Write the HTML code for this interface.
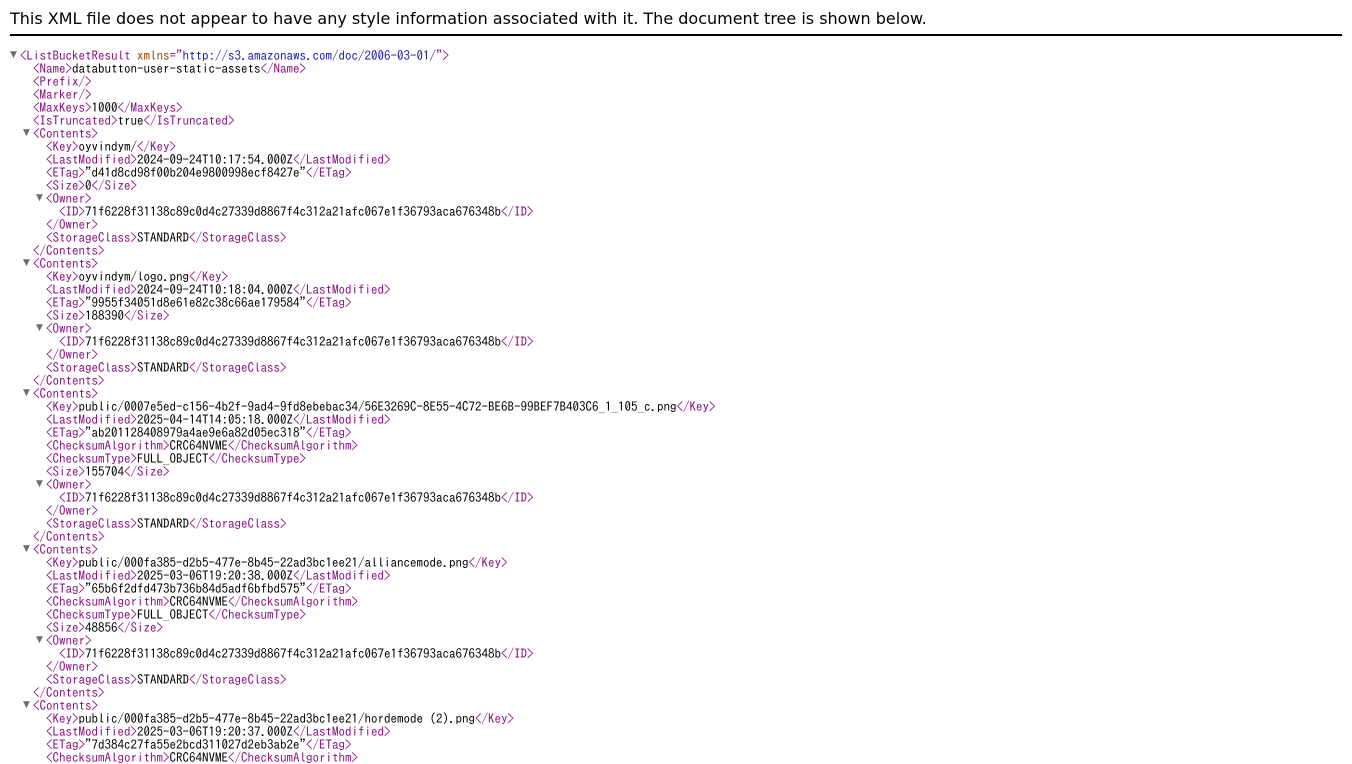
<!DOCTYPE html>
<html><head><meta charset="utf-8"><style>
html,body{margin:0;padding:0;background:#fff;width:1352px;height:760px;overflow:hidden}
.hd{position:absolute;left:10px;top:0;width:1332px;height:34px;border-bottom:2px solid #000;font-family:"DejaVu Sans","Liberation Sans",sans-serif;font-size:16px;line-height:16px}
.hd span{position:absolute;left:0;top:11px;white-space:nowrap}
#tree{position:absolute;left:20px;top:49px;font-family:"IPAGothic","Noto Sans CJK JP",monospace;font-size:13px;line-height:13px;color:#000}
.l{height:13px;position:relative;white-space:pre}
.t{color:#881280}.a{color:#994500}.v{color:#1a1aa6}
.ar{position:absolute;left:-10px;top:0;color:#6e6e6e;font-size:9px;font-family:"DejaVu Sans",sans-serif;line-height:13px}
</style></head><body>
<div class="hd"><span>This XML file does not appear to have any style information associated with it. The document tree is shown below.</span></div>
<div id="tree"><div class="l" style="padding-left:0"><span class="ar">▼</span><span class="t">&lt;ListBucketResult</span> <span class="a">xmlns</span><span class="t">="</span><span class="v">http://s3.amazonaws.com/doc/2006-03-01/</span><span class="t">"&gt;</span></div>
<div class="l" style="padding-left:13px"><span class="t">&lt;Name&gt;</span>databutton-user-static-assets<span class="t">&lt;/Name&gt;</span></div>
<div class="l" style="padding-left:13px"><span class="t">&lt;Prefix/&gt;</span></div>
<div class="l" style="padding-left:13px"><span class="t">&lt;Marker/&gt;</span></div>
<div class="l" style="padding-left:13px"><span class="t">&lt;MaxKeys&gt;</span>1000<span class="t">&lt;/MaxKeys&gt;</span></div>
<div class="l" style="padding-left:13px"><span class="t">&lt;IsTruncated&gt;</span>true<span class="t">&lt;/IsTruncated&gt;</span></div>
<div class="l" style="padding-left:13px"><span class="ar" style="left:3px">▼</span><span class="t">&lt;Contents&gt;</span></div>
<div class="l" style="padding-left:26px"><span class="t">&lt;Key&gt;</span>oyvindym/<span class="t">&lt;/Key&gt;</span></div>
<div class="l" style="padding-left:26px"><span class="t">&lt;LastModified&gt;</span>2024-09-24T10:17:54.000Z<span class="t">&lt;/LastModified&gt;</span></div>
<div class="l" style="padding-left:26px"><span class="t">&lt;ETag&gt;</span>"d41d8cd98f00b204e9800998ecf8427e"<span class="t">&lt;/ETag&gt;</span></div>
<div class="l" style="padding-left:26px"><span class="t">&lt;Size&gt;</span>0<span class="t">&lt;/Size&gt;</span></div>
<div class="l" style="padding-left:26px"><span class="ar" style="left:16px">▼</span><span class="t">&lt;Owner&gt;</span></div>
<div class="l" style="padding-left:39px"><span class="t">&lt;ID&gt;</span>71f6228f31138c89c0d4c27339d8867f4c312a21afc067e1f36793aca676348b<span class="t">&lt;/ID&gt;</span></div>
<div class="l" style="padding-left:26px"><span class="t">&lt;/Owner&gt;</span></div>
<div class="l" style="padding-left:26px"><span class="t">&lt;StorageClass&gt;</span>STANDARD<span class="t">&lt;/StorageClass&gt;</span></div>
<div class="l" style="padding-left:13px"><span class="t">&lt;/Contents&gt;</span></div>
<div class="l" style="padding-left:13px"><span class="ar" style="left:3px">▼</span><span class="t">&lt;Contents&gt;</span></div>
<div class="l" style="padding-left:26px"><span class="t">&lt;Key&gt;</span>oyvindym/logo.png<span class="t">&lt;/Key&gt;</span></div>
<div class="l" style="padding-left:26px"><span class="t">&lt;LastModified&gt;</span>2024-09-24T10:18:04.000Z<span class="t">&lt;/LastModified&gt;</span></div>
<div class="l" style="padding-left:26px"><span class="t">&lt;ETag&gt;</span>"9955f34051d8e61e82c38c66ae179584"<span class="t">&lt;/ETag&gt;</span></div>
<div class="l" style="padding-left:26px"><span class="t">&lt;Size&gt;</span>188390<span class="t">&lt;/Size&gt;</span></div>
<div class="l" style="padding-left:26px"><span class="ar" style="left:16px">▼</span><span class="t">&lt;Owner&gt;</span></div>
<div class="l" style="padding-left:39px"><span class="t">&lt;ID&gt;</span>71f6228f31138c89c0d4c27339d8867f4c312a21afc067e1f36793aca676348b<span class="t">&lt;/ID&gt;</span></div>
<div class="l" style="padding-left:26px"><span class="t">&lt;/Owner&gt;</span></div>
<div class="l" style="padding-left:26px"><span class="t">&lt;StorageClass&gt;</span>STANDARD<span class="t">&lt;/StorageClass&gt;</span></div>
<div class="l" style="padding-left:13px"><span class="t">&lt;/Contents&gt;</span></div>
<div class="l" style="padding-left:13px"><span class="ar" style="left:3px">▼</span><span class="t">&lt;Contents&gt;</span></div>
<div class="l" style="padding-left:26px"><span class="t">&lt;Key&gt;</span>public/0007e5ed-c156-4b2f-9ad4-9fd8ebebac34/56E3269C-8E55-4C72-BE6B-99BEF7B403C6_1_105_c.png<span class="t">&lt;/Key&gt;</span></div>
<div class="l" style="padding-left:26px"><span class="t">&lt;LastModified&gt;</span>2025-04-14T14:05:18.000Z<span class="t">&lt;/LastModified&gt;</span></div>
<div class="l" style="padding-left:26px"><span class="t">&lt;ETag&gt;</span>"ab201128408979a4ae9e6a82d05ec318"<span class="t">&lt;/ETag&gt;</span></div>
<div class="l" style="padding-left:26px"><span class="t">&lt;ChecksumAlgorithm&gt;</span>CRC64NVME<span class="t">&lt;/ChecksumAlgorithm&gt;</span></div>
<div class="l" style="padding-left:26px"><span class="t">&lt;ChecksumType&gt;</span>FULL_OBJECT<span class="t">&lt;/ChecksumType&gt;</span></div>
<div class="l" style="padding-left:26px"><span class="t">&lt;Size&gt;</span>155704<span class="t">&lt;/Size&gt;</span></div>
<div class="l" style="padding-left:26px"><span class="ar" style="left:16px">▼</span><span class="t">&lt;Owner&gt;</span></div>
<div class="l" style="padding-left:39px"><span class="t">&lt;ID&gt;</span>71f6228f31138c89c0d4c27339d8867f4c312a21afc067e1f36793aca676348b<span class="t">&lt;/ID&gt;</span></div>
<div class="l" style="padding-left:26px"><span class="t">&lt;/Owner&gt;</span></div>
<div class="l" style="padding-left:26px"><span class="t">&lt;StorageClass&gt;</span>STANDARD<span class="t">&lt;/StorageClass&gt;</span></div>
<div class="l" style="padding-left:13px"><span class="t">&lt;/Contents&gt;</span></div>
<div class="l" style="padding-left:13px"><span class="ar" style="left:3px">▼</span><span class="t">&lt;Contents&gt;</span></div>
<div class="l" style="padding-left:26px"><span class="t">&lt;Key&gt;</span>public/000fa385-d2b5-477e-8b45-22ad3bc1ee21/alliancemode.png<span class="t">&lt;/Key&gt;</span></div>
<div class="l" style="padding-left:26px"><span class="t">&lt;LastModified&gt;</span>2025-03-06T19:20:38.000Z<span class="t">&lt;/LastModified&gt;</span></div>
<div class="l" style="padding-left:26px"><span class="t">&lt;ETag&gt;</span>"65b6f2dfd473b736b84d5adf6bfbd575"<span class="t">&lt;/ETag&gt;</span></div>
<div class="l" style="padding-left:26px"><span class="t">&lt;ChecksumAlgorithm&gt;</span>CRC64NVME<span class="t">&lt;/ChecksumAlgorithm&gt;</span></div>
<div class="l" style="padding-left:26px"><span class="t">&lt;ChecksumType&gt;</span>FULL_OBJECT<span class="t">&lt;/ChecksumType&gt;</span></div>
<div class="l" style="padding-left:26px"><span class="t">&lt;Size&gt;</span>48856<span class="t">&lt;/Size&gt;</span></div>
<div class="l" style="padding-left:26px"><span class="ar" style="left:16px">▼</span><span class="t">&lt;Owner&gt;</span></div>
<div class="l" style="padding-left:39px"><span class="t">&lt;ID&gt;</span>71f6228f31138c89c0d4c27339d8867f4c312a21afc067e1f36793aca676348b<span class="t">&lt;/ID&gt;</span></div>
<div class="l" style="padding-left:26px"><span class="t">&lt;/Owner&gt;</span></div>
<div class="l" style="padding-left:26px"><span class="t">&lt;StorageClass&gt;</span>STANDARD<span class="t">&lt;/StorageClass&gt;</span></div>
<div class="l" style="padding-left:13px"><span class="t">&lt;/Contents&gt;</span></div>
<div class="l" style="padding-left:13px"><span class="ar" style="left:3px">▼</span><span class="t">&lt;Contents&gt;</span></div>
<div class="l" style="padding-left:26px"><span class="t">&lt;Key&gt;</span>public/000fa385-d2b5-477e-8b45-22ad3bc1ee21/hordemode (2).png<span class="t">&lt;/Key&gt;</span></div>
<div class="l" style="padding-left:26px"><span class="t">&lt;LastModified&gt;</span>2025-03-06T19:20:37.000Z<span class="t">&lt;/LastModified&gt;</span></div>
<div class="l" style="padding-left:26px"><span class="t">&lt;ETag&gt;</span>"7d384c27fa55e2bcd311027d2eb3ab2e"<span class="t">&lt;/ETag&gt;</span></div>
<div class="l" style="padding-left:26px"><span class="t">&lt;ChecksumAlgorithm&gt;</span>CRC64NVME<span class="t">&lt;/ChecksumAlgorithm&gt;</span></div></div>
</body></html>
